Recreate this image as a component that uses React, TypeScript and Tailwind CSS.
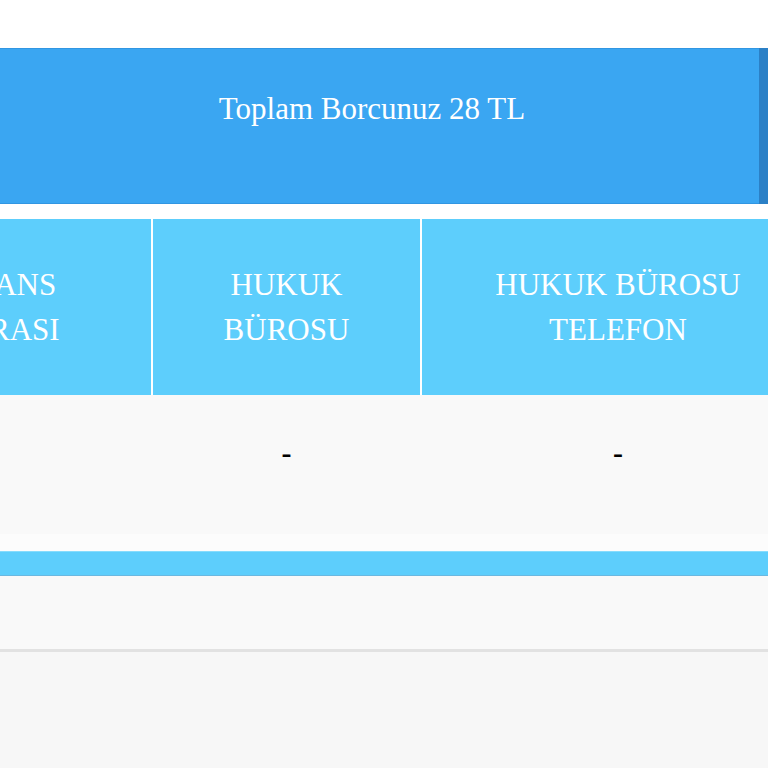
export default function App() {
  const columns = [
    { title: ["REFERANS", "NUMARASI"], value: "", width: "w-[348px]" },
    { title: ["HUKUK", "BÜROSU"], value: "-", width: "w-[269px]" },
    { title: ["HUKUK BÜROSU", "TELEFON"], value: "-", width: "w-[394px]" },
  ];

  return (
    <main className="min-h-screen bg-[#f7f7f7] font-['Liberation_Serif',serif]">
      <div className="h-12 bg-white" />

      {/* toplam borc */}
      <div className="flex h-[156px] bg-white">
        <div className="flex-1 bg-[#3aa6f2] border-t border-b border-[#3196e2] pt-[37px] pr-[15px] text-center text-[31px] leading-[45px] text-white">
          Toplam Borcunuz 28 TL
        </div>
        <div className="w-[9px] bg-[#2b80c6]" />
      </div>

      <div className="h-[15px] bg-white" />

      {/* tablo, sola kaydirilmis */}
      <div className="overflow-hidden">
        <div className="ml-[-197px] w-[1011px]">
          <div className="flex bg-[#5dcefc] text-white text-[31px] leading-[45px]">
            {columns.map((col, i) => (
              <div
                key={i}
                className={`${col.width} shrink-0 py-[43px] text-center ${
                  i > 0 ? "border-l-2 border-white" : ""
                }`}
              >
                {col.title.map((line) => (
                  <div key={line}>{line}</div>
                ))}
              </div>
            ))}
          </div>

          <div className="flex h-[139px] bg-[#f9f9f9] text-black text-[30px] leading-[45px] font-bold">
            {columns.map((col, i) => (
              <div
                key={i}
                className={`${col.width} shrink-0 pt-[35px] text-center ${
                  i > 0 ? "border-l-2 border-transparent" : ""
                }`}
              >
                {col.value}
              </div>
            ))}
          </div>
        </div>
      </div>

      <div className="h-[17px] bg-[#fcfcfc]" />
      <div className="h-[25px] bg-[#5dcefc] border-t border-[#86dcfd] border-b border-b-[#6bb8e0]" />
      <div className="h-[73px] bg-[#f9f9f9]" />
      <div className="h-[3px] bg-[#e2e2e2]" />
      <div className="h-[116px] bg-[#f7f7f7]" />
    </main>
  );
}
